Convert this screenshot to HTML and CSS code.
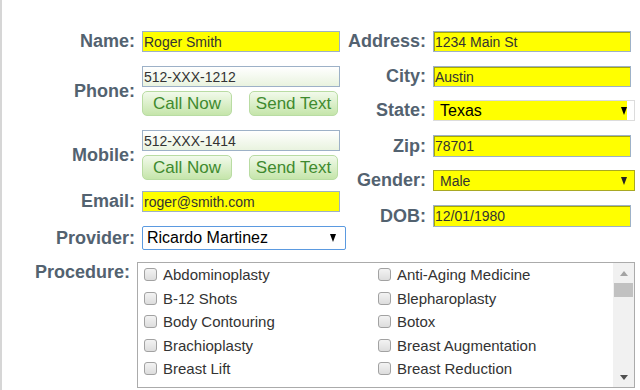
FILE: index.html
```html
<!DOCTYPE html>
<html>
<head>
<meta charset="utf-8">
<link rel="stylesheet" href="styles.css">
</head>
<body>
<div class="page">
  <div class="top">
    <div class="col col-left">
      <div class="row">
        <label class="lbl">Name:</label>
        <input class="input yellow" value="Roger Smith">
      </div>
      <div class="row">
        <label class="lbl">Phone:</label>
        <div class="phone-field">
          <input class="input phone" value="512-XXX-1212">
          <div class="btns">
            <button class="btn call">Call Now</button>
            <button class="btn text">Send Text</button>
          </div>
        </div>
      </div>
      <div class="row">
        <label class="lbl">Mobile:</label>
        <div class="phone-field">
          <input class="input phone" value="512-XXX-1414">
          <div class="btns">
            <button class="btn call">Call Now</button>
            <button class="btn text">Send Text</button>
          </div>
        </div>
      </div>
      <div class="row r-email">
        <label class="lbl">Email:</label>
        <input class="input yellow" value="roger@smith.com">
      </div>
      <div class="row">
        <label class="lbl">Provider:</label>
        <div class="select sel-provider"><span>Ricardo Martinez</span><span class="arrow"></span></div>
      </div>
    </div>
    <div class="col col-right">
      <div class="row">
        <label class="lbl">Address:</label>
        <input class="input yellow inset" value="1234 Main St">
      </div>
      <div class="row r-plus">
        <label class="lbl">City:</label>
        <input class="input yellow inset" value="Austin">
      </div>
      <div class="row">
        <label class="lbl">State:</label>
        <div class="select sel-state"><span>Texas</span><span class="arrow"></span></div>
      </div>
      <div class="row r-plus">
        <label class="lbl">Zip:</label>
        <input class="input yellow inset tall" value="78701">
      </div>
      <div class="row">
        <label class="lbl">Gender:</label>
        <div class="select sel-gender"><span>Male</span><span class="arrow"></span></div>
      </div>
      <div class="row r-plus">
        <label class="lbl">DOB:</label>
        <input class="input yellow inset tall" value="12/01/1980">
      </div>
    </div>
  </div>
  <div class="procedure">
    <label class="lbl">Procedure:</label>
    <div class="box">
      <div class="list">
        <label class="item"><input type="checkbox">Abdominoplasty</label>
        <label class="item"><input type="checkbox">Anti-Aging Medicine</label>
        <label class="item"><input type="checkbox">B-12 Shots</label>
        <label class="item"><input type="checkbox">Blepharoplasty</label>
        <label class="item"><input type="checkbox">Body Contouring</label>
        <label class="item"><input type="checkbox">Botox</label>
        <label class="item"><input type="checkbox">Brachioplasty</label>
        <label class="item"><input type="checkbox">Breast Augmentation</label>
        <label class="item"><input type="checkbox">Breast Lift</label>
        <label class="item"><input type="checkbox">Breast Reduction</label>
      </div>
      <div class="scrollbar">
        <div class="sb-btn sb-up"><span class="tri-up"></span></div>
        <div class="thumb"></div>
        <div class="sb-space"></div>
        <div class="sb-btn sb-down"><span class="tri-down"></span></div>
      </div>
    </div>
  </div>
</div>
</body>
</html>
```
FILE: styles.css
```css
html, body {
  margin: 0;
  padding: 0;
  background: #fff;
  font-family: "Liberation Sans", Arial, sans-serif;
}

.page {
  border-left: 2px solid #d6d6d6;
  height: 390px;
  box-sizing: border-box;
  padding-top: 31px;
  overflow: hidden;
}

.top {
  display: flex;
}

.col {
  display: flex;
  flex-direction: column;
}

.col-left {
  width: 338px;
  flex: none;
  gap: 14px;
}

.col-right {
  gap: 13px;
}

.row {
  display: flex;
  align-items: center;
  gap: 7px;
}

.r-email {
  margin-top: -3px;
}

.r-plus {
  margin-top: 1px;
}

.lbl {
  flex: none;
  text-align: right;
  font-weight: bold;
  font-size: 18px;
  line-height: 21px;
  color: #536270;
}

.col-left .lbl {
  width: 133px;
}

.col-right .lbl {
  width: 86px;
}

.input {
  flex: none;
  width: 198px;
  height: 21px;
  box-sizing: border-box;
  margin: 0;
  border: 1px solid #9db1c7;
  padding: 0 1px;
  font-family: "Liberation Sans", Arial, sans-serif;
  font-size: 14px;
  color: #333;
  outline: none;
}

.tall {
  height: 22px;
}

.yellow {
  background: #ffff00;
}

.inset {
  box-shadow: inset 1px 1px 0 #a8a800;
}

.phone {
  background: linear-gradient(#ffffff, #e9f3df);
}

.phone-field {
  flex: none;
  display: flex;
  flex-direction: column;
  gap: 4px;
  width: 198px;
}

.btns {
  display: flex;
  gap: 17px;
}

.btn {
  height: 25px;
  box-sizing: border-box;
  margin: 0;
  padding: 0;
  border: 1px solid #b9dca3;
  border-radius: 5px;
  background: linear-gradient(#f2faeb, #c5e5aa);
  color: #3f8a2f;
  font-family: "Liberation Sans", Arial, sans-serif;
  font-size: 17px;
  line-height: 23px;
}

.btn.call {
  width: 90px;
}

.btn.text {
  width: 89px;
}

.select {
  flex: none;
  display: flex;
  align-items: center;
  justify-content: space-between;
  box-sizing: border-box;
  height: 21px;
  font-family: "Liberation Sans", Arial, sans-serif;
}

.arrow {
  width: 0;
  height: 0;
  border-left: 3.5px solid transparent;
  border-right: 3.5px solid transparent;
  border-top: 8px solid #000;
}

.sel-state {
  width: 202px;
  border: 1px solid #dcdcdc;
  background: linear-gradient(to right, #ffff00 193px, #ffffff 193px);
  padding: 0 7px 0 6px;
  font-size: 16px;
  color: #000;
}

.sel-gender {
  width: 202px;
  border: 1px solid #a8a823;
  background: #ffff00;
  padding: 0 7px 0 6px;
  font-size: 14px;
  color: #333;
}

.sel-gender .arrow {
  border-top-color: #222;
}

.sel-provider {
  width: 204px;
  height: 24px;
  border: 1px solid #5b9ae0;
  border-radius: 2px;
  background: #fff;
  padding: 0 9px 0 4px;
  font-size: 16px;
  color: #000;
}

.procedure {
  display: flex;
  align-items: flex-start;
  gap: 7px;
  margin-top: 12px;
}

.procedure .lbl {
  width: 128px;
}

.box {
  width: 498px;
  height: 126px;
  box-sizing: border-box;
  border: 1px solid #ababab;
  display: flex;
}

.list {
  flex: 1;
  overflow: hidden;
  display: grid;
  grid-template-columns: 234px 1fr;
  grid-auto-rows: 23.5px;
  align-content: start;
  padding-left: 6px;
}

.item {
  display: flex;
  align-items: center;
  gap: 6px;
  font-size: 15px;
  color: #333;
  white-space: nowrap;
}

.item input {
  appearance: none;
  -webkit-appearance: none;
  flex: none;
  width: 13px;
  height: 13px;
  margin: 0;
  box-sizing: border-box;
  border: 1px solid #a2a2a2;
  border-radius: 3px;
  background: linear-gradient(#f3f3f3, #dddddd);
}

.scrollbar {
  width: 21px;
  flex: none;
  background: #f1f1f1;
  display: flex;
  flex-direction: column;
  align-items: center;
}

.sb-btn {
  width: 100%;
  height: 20px;
  display: flex;
  align-items: center;
  justify-content: center;
}

.tri-up {
  width: 0;
  height: 0;
  border-left: 4.5px solid transparent;
  border-right: 4.5px solid transparent;
  border-bottom: 5px solid #a3a3a3;
}

.tri-down {
  width: 0;
  height: 0;
  border-left: 4.5px solid transparent;
  border-right: 4.5px solid transparent;
  border-top: 5px solid #505050;
}

.thumb {
  width: 19px;
  height: 14px;
  background: #c1c1c1;
}

.sb-space {
  flex: 1;
}
```
